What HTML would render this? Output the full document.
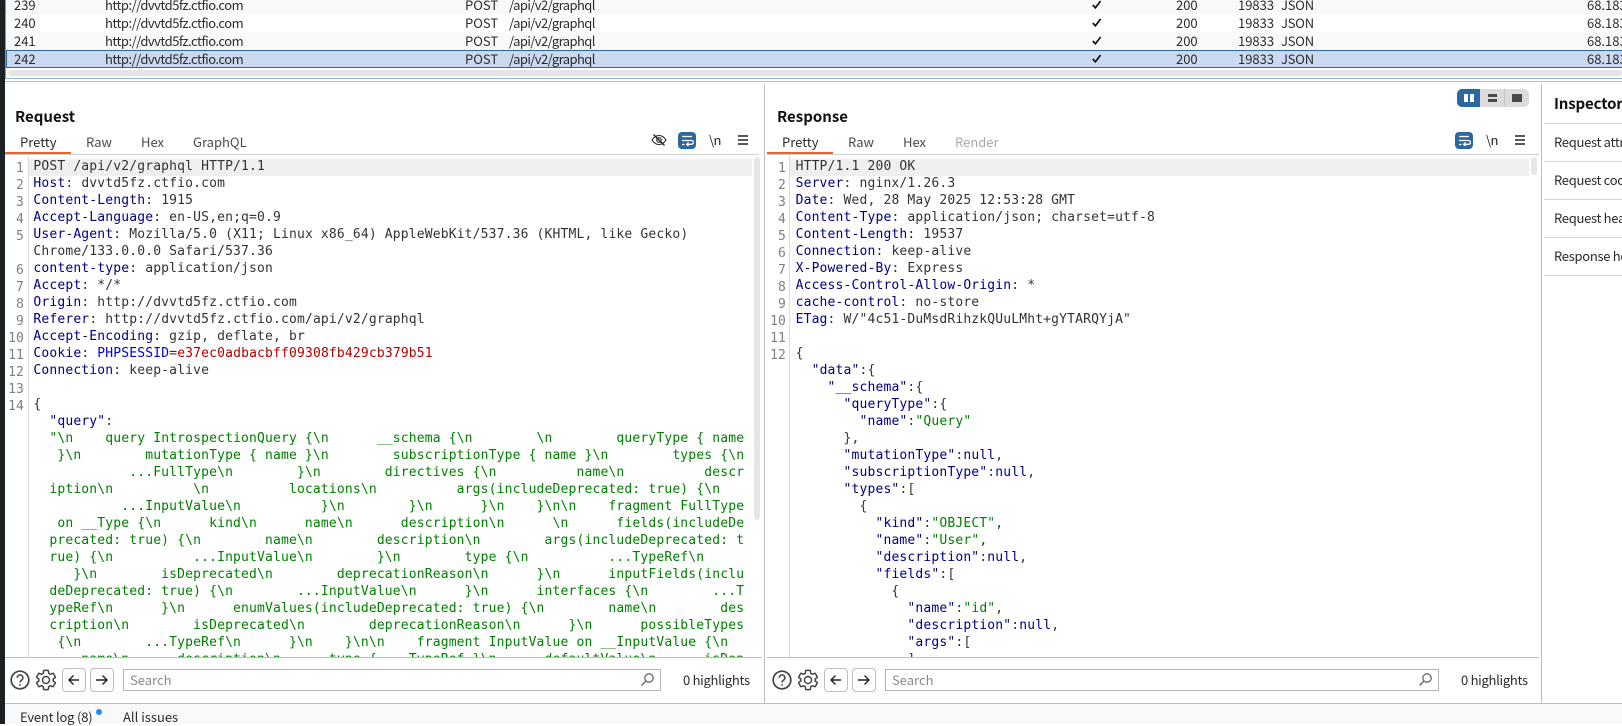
<!DOCTYPE html>
<html><head><meta charset="utf-8">
<style>
html,body{margin:0;padding:0;background:#fff}
body{width:1622px;height:724px;position:relative;overflow:hidden;font-family:"Noto Sans CJK SC","Liberation Sans",sans-serif;font-size:13px;color:#2b2b2b}
.a{position:absolute}
.t{position:absolute;white-space:pre;line-height:18px;height:18px}
.u{letter-spacing:-.5px}
.v{letter-spacing:-.6px}
.i{letter-spacing:-.2px}
.row{position:absolute;left:6px;right:0;height:18px}
.code{position:absolute;margin:0;font-family:"DejaVu Sans Mono","Liberation Mono",monospace;font-size:13px;letter-spacing:.16px;line-height:17px;color:#333;white-space:pre}
.nums{position:absolute;margin:0;font-family:"DejaVu Sans Mono",monospace;font-size:13px;letter-spacing:.135px;line-height:17px;color:#808080;text-align:right;white-space:pre}
.n{color:#000080}.s{color:#008000}.b{color:#0000d0}.r{color:#b00000}
.h{font-weight:700;font-size:15px;color:#111}
.line{position:absolute;background:#bdbdbd}
.btn{position:absolute;width:22px;height:22px;border:1px solid #bdbdbd;border-radius:4px;box-sizing:content-box}
.search{position:absolute;height:20px;border:1px solid #b5b5b5;top:669px;box-sizing:content-box;color:#8a8a8a;line-height:20px;padding-left:6px}
svg{position:absolute;overflow:visible}
</style></head><body>

<!-- table -->
<div class="row" style="top:-4px;background:#f9f9f9"></div>
<div class="row" style="top:32px;background:#f9f9f9"></div>
<div class="row" style="top:50px;height:16px;background:#c9d9ef;border:1px solid #2a689f;border-right:0"></div>

<div class="t" style="left:14px;top:-4px">239</div><div class="t u" style="left:105px;top:-4px">http://dvvtd5fz.ctfio.com</div><div class="t" style="left:465px;top:-4px">POST</div><div class="t v" style="left:509px;top:-4px">/api/v2/graphql</div><div class="t" style="left:1176px;top:-4px">200</div><div class="t" style="left:1238px;top:-4px">19833</div><div class="t i" style="left:1281px;top:-4px">JSON</div><div class="t" style="left:1587px;top:-4px">68.183.</div>
<div class="t" style="left:14px;top:14px">240</div><div class="t u" style="left:105px;top:14px">http://dvvtd5fz.ctfio.com</div><div class="t" style="left:465px;top:14px">POST</div><div class="t v" style="left:509px;top:14px">/api/v2/graphql</div><div class="t" style="left:1176px;top:14px">200</div><div class="t" style="left:1238px;top:14px">19833</div><div class="t i" style="left:1281px;top:14px">JSON</div><div class="t" style="left:1587px;top:14px">68.183.</div>
<div class="t" style="left:14px;top:32px">241</div><div class="t u" style="left:105px;top:32px">http://dvvtd5fz.ctfio.com</div><div class="t" style="left:465px;top:32px">POST</div><div class="t v" style="left:509px;top:32px">/api/v2/graphql</div><div class="t" style="left:1176px;top:32px">200</div><div class="t" style="left:1238px;top:32px">19833</div><div class="t i" style="left:1281px;top:32px">JSON</div><div class="t" style="left:1587px;top:32px">68.183.</div>
<div class="t" style="left:14px;top:50px">242</div><div class="t u" style="left:105px;top:50px">http://dvvtd5fz.ctfio.com</div><div class="t" style="left:465px;top:50px">POST</div><div class="t v" style="left:509px;top:50px">/api/v2/graphql</div><div class="t" style="left:1176px;top:50px">200</div><div class="t" style="left:1238px;top:50px">19833</div><div class="t i" style="left:1281px;top:50px">JSON</div><div class="t" style="left:1587px;top:50px">68.183.</div>

<svg style="left:1092px;top:0" width="10" height="66" fill="none" stroke="#111" stroke-width="1.7"><path d="M.8 5l2.6 2.8L8.6 1"/><path d="M.8 23l2.6 2.8L8.6 19"/><path d="M.8 41l2.6 2.8L8.6 37"/><path d="M.8 59l2.6 2.8L8.6 55"/></svg>

<div class="a" style="left:8px;right:0;top:70px;height:6px;background:#e5e5e5;border-radius:3px"></div>
<div class="a" style="left:5px;right:0;top:78px;height:1px;background:#8fb8dc"></div>
<div class="line" style="left:5px;right:0;top:81px;height:1px"></div>
<div class="a" style="left:5px;top:0;width:1px;height:79px;background:#6f9fc8"></div>

<!-- splitters -->
<div class="line" style="left:764px;top:84px;width:1px;height:619px"></div>
<div class="line" style="left:1541px;top:84px;width:1px;height:619px"></div>

<!-- layout toggle -->
<div class="a" style="left:1457px;top:89px;width:72px;height:18px;background:#dcdcdc;border-radius:5px"></div>
<div class="a" style="left:1457px;top:89px;width:23px;height:18px;background:#2a689f;border-radius:5px 0 0 5px"></div>
<div class="a" style="left:1504px;top:89px;width:1px;height:18px;background:#c4c4c4"></div>
<div class="a" style="left:1464px;top:94px;width:4px;height:8px;background:#fff"></div>
<div class="a" style="left:1470px;top:94px;width:4px;height:8px;background:#fff"></div>
<div class="a" style="left:1488px;top:94px;width:9px;height:3px;background:#4a4a4a"></div>
<div class="a" style="left:1488px;top:99px;width:9px;height:3px;background:#4a4a4a"></div>
<div class="a" style="left:1512px;top:94px;width:10px;height:8px;background:#4a4a4a"></div>

<!-- request -->
<div class="t h" style="left:15px;top:108px">Request</div>
<div class="t" style="left:20px;top:133px">Pretty</div>
<div class="t" style="left:86px;top:133px;color:#4a4a4a">Raw</div>
<div class="t" style="left:141px;top:133px;color:#4a4a4a">Hex</div>
<div class="t" style="left:193px;top:133px;color:#4a4a4a">GraphQL</div>
<div class="a" style="left:5px;top:152px;width:66px;height:2px;background:#e8622c"></div>
<div class="line" style="left:5px;top:154px;width:754px;height:1px;background:#cfcfcf"></div>

<svg style="left:651px;top:132px" width="16" height="16" fill="none" stroke="#222" stroke-width="1.1"><path d="M1 8c2-3 4.400-4.500 7-4.500S13 5 15 8c-2 3-4.400 4.500-7 4.500S3 11 1 8z"/><circle cx="8" cy="8" r="2.300"/><path d="M2.500 2.500l11 11" stroke-width="1.300"/></svg>
<div class="a" style="left:678px;top:132px;width:18px;height:17px;background:#2a689f;border-radius:4px"></div>
<svg style="left:678px;top:132px" width="18" height="17" fill="none" stroke="#fff" stroke-width="1.300"><path d="M4 4.500h10"/><path d="M4 8.500h9.500a1.800 1.800 0 0 1 0 3.800H9"/><path d="M10.500 10.500L8.700 12.300l1.800 1.700"/><path d="M4 12.500h2.500"/></svg>
<div class="t v" style="left:709px;top:131px;color:#222">\n</div>
<svg style="left:738px;top:135px" width="10" height="10" stroke="#222" stroke-width="1.500"><path d="M0 1h10M0 5h10M0 9h10"/></svg>

<div class="a" style="left:28px;top:155px;width:1px;height:502px;background:#dcdcdc"></div>
<div class="a" style="left:29px;top:159px;width:723px;height:17px;background:#efefef"></div>
<div class="a" style="left:754px;top:157px;width:6px;height:363px;background:#e6e6e6;border-radius:3px"></div>

<div class="a" style="left:0;top:155px;width:762px;height:502px;overflow:hidden">
<pre class="nums" style="left:0;top:5px;width:24px">1
2
3
4
5

6
7
8
9
10
11
12
13
14</pre>
<pre class="code" style="left:33.400px;top:3px">POST /api/v2/graphql HTTP/1.1
<span class="n">Host</span>: dvvtd5fz.ctfio.com
<span class="n">Content-Length</span>: 1915
<span class="n">Accept-Language</span>: en-US,en;q=0.9
<span class="n">User-Agent</span>: Mozilla/5.0 (X11; Linux x86_64) AppleWebKit/537.36 (KHTML, like Gecko)
Chrome/133.0.0.0 Safari/537.36
<span class="n">content-type</span>: application/json
<span class="n">Accept</span>: */*
<span class="n">Origin</span>: http://dvvtd5fz.ctfio.com
<span class="n">Referer</span>: http://dvvtd5fz.ctfio.com/api/v2/graphql
<span class="n">Accept-Encoding</span>: gzip, deflate, br
<span class="n">Cookie</span>: <span class="b">PHPSESSID</span>=<span class="r">e37ec0adbacbff09308fb429cb379b51</span>
<span class="n">Connection</span>: keep-alive

{
  <span class="n">"query"</span>:
  <span class="s">"\n    query IntrospectionQuery {\n      __schema {\n        \n        queryType { name
   }\n        mutationType { name }\n        subscriptionType { name }\n        types {\n
            ...FullType\n        }\n        directives {\n          name\n          descr
  iption\n          \n          locations\n          args(includeDeprecated: true) {\n   
           ...InputValue\n          }\n        }\n      }\n    }\n\n    fragment FullType
   on __Type {\n      kind\n      name\n      description\n      \n      fields(includeDe
  precated: true) {\n        name\n        description\n        args(includeDeprecated: t
  rue) {\n          ...InputValue\n        }\n        type {\n          ...TypeRef\n     
     }\n        isDeprecated\n        deprecationReason\n      }\n      inputFields(inclu
  deDeprecated: true) {\n        ...InputValue\n      }\n      interfaces {\n        ...T
  ypeRef\n      }\n      enumValues(includeDeprecated: true) {\n        name\n        des
  cription\n        isDeprecated\n        deprecationReason\n      }\n      possibleTypes
   {\n        ...TypeRef\n      }\n    }\n\n    fragment InputValue on __InputValue {\n  
      name\n      description\n      type { ...TypeRef }\n      defaultValue\n      isDep</span></pre>
</div>

<!-- response -->
<div class="t h" style="left:777px;top:108px">Response</div>
<div class="t" style="left:782px;top:133px">Pretty</div>
<div class="t" style="left:848px;top:133px;color:#4a4a4a">Raw</div>
<div class="t" style="left:903px;top:133px;color:#4a4a4a">Hex</div>
<div class="t" style="left:955px;top:133px;color:#a8a8a8">Render</div>
<div class="a" style="left:767px;top:152px;width:66px;height:2px;background:#e8622c"></div>
<div class="line" style="left:767px;top:154px;width:772px;height:1px;background:#cfcfcf"></div>

<div class="a" style="left:1455px;top:132px;width:18px;height:17px;background:#2a689f;border-radius:4px"></div>
<svg style="left:1455px;top:132px" width="18" height="17" fill="none" stroke="#fff" stroke-width="1.300"><path d="M4 4.500h10"/><path d="M4 8.500h9.500a1.800 1.800 0 0 1 0 3.800H9"/><path d="M10.500 10.500L8.700 12.300l1.800 1.700"/><path d="M4 12.500h2.500"/></svg>
<div class="t v" style="left:1486px;top:131px;color:#222">\n</div>
<svg style="left:1515px;top:135px" width="10" height="10" stroke="#222" stroke-width="1.500"><path d="M0 1h10M0 5h10M0 9h10"/></svg>

<div class="a" style="left:789px;top:155px;width:1px;height:502px;background:#dcdcdc"></div>
<div class="a" style="left:790px;top:159px;width:739px;height:17px;background:#efefef"></div>
<div class="a" style="left:1531px;top:157px;width:6px;height:18px;background:#e6e6e6;border-radius:3px"></div>

<div class="a" style="left:766px;top:155px;width:773px;height:502px;overflow:hidden">
<pre class="nums" style="left:0;top:5px;width:20px">1
2
3
4
5
6
7
8
9
10
11
12</pre>
<pre class="code" style="left:29.600px;top:3px">HTTP/1.1 200 OK
<span class="n">Server</span>: nginx/1.26.3
<span class="n">Date</span>: Wed, 28 May 2025 12:53:28 GMT
<span class="n">Content-Type</span>: application/json; charset=utf-8
<span class="n">Content-Length</span>: 19537
<span class="n">Connection</span>: keep-alive
<span class="n">X-Powered-By</span>: Express
<span class="n">Access-Control-Allow-Origin</span>: *
<span class="n">cache-control</span>: no-store
<span class="n">ETag</span>: W/"4c51-DuMsdRihzkQUuLMht+gYTARQYjA"

{
  <span class="n">"data"</span>:{
    <span class="n">"__schema"</span>:{
      <span class="n">"queryType"</span>:{
        <span class="n">"name"</span>:<span class="s">"Query"</span>
      },
      <span class="n">"mutationType"</span>:<span class="n">null</span>,
      <span class="n">"subscriptionType"</span>:<span class="n">null</span>,
      <span class="n">"types"</span>:[
        {
          <span class="n">"kind"</span>:<span class="s">"OBJECT"</span>,
          <span class="n">"name"</span>:<span class="s">"User"</span>,
          <span class="n">"description"</span>:<span class="n">null</span>,
          <span class="n">"fields"</span>:[
            {
              <span class="n">"name"</span>:<span class="s">"id"</span>,
              <span class="n">"description"</span>:<span class="n">null</span>,
              <span class="n">"args"</span>:[
              ]</pre>
</div>

<!-- inspector -->
<div class="t h" style="left:1554px;top:95px;letter-spacing:-.15px">Inspector</div>
<div class="line" style="left:1544px;right:0;top:123px;height:1px;background:#d5d5d5"></div>
<div class="t i" style="left:1554px;top:133px;letter-spacing:-.3px">Request attributes</div>
<div class="line" style="left:1544px;right:0;top:161px;height:1px;background:#d5d5d5"></div>
<div class="t i" style="left:1554px;top:171px;letter-spacing:-.3px">Request cookies</div>
<div class="line" style="left:1544px;right:0;top:199px;height:1px;background:#d5d5d5"></div>
<div class="t i" style="left:1554px;top:209px;letter-spacing:-.3px">Request headers</div>
<div class="line" style="left:1544px;right:0;top:237px;height:1px;background:#d5d5d5"></div>
<div class="t i" style="left:1554px;top:247px;letter-spacing:-.3px">Response headers</div>
<div class="line" style="left:1544px;right:0;top:275px;height:1px;background:#d5d5d5"></div>

<!-- bottom bars -->
<div class="line" style="left:5px;top:657px;width:757px;height:1px"></div>
<div class="line" style="left:767px;top:657px;width:772px;height:1px"></div>

<svg style="left:10px;top:670px" width="20" height="20" fill="none" stroke="#444" stroke-width="1.700"><circle cx="10" cy="10" r="8.800"/><path d="M7.300 7.800a2.800 2.800 0 1 1 4.300 2.300c-1 .7-1.600 1.200-1.600 2.400" stroke-width="1.500"/><path d="M10 14.200v1.600" stroke-width="1.600"/></svg>
<svg style="left:34px;top:668px" width="24" height="24" viewBox="0 0 24 24" fill="none" stroke="#444" stroke-width="1.500"><path d="M19.140 12.940c.04-.3.06-.61.06-.94 0-.32-.02-.64-.07-.94l2.030-1.580c.18-.14.230-.41.120-.61l-1.920-3.320c-.12-.22-.37-.29-.59-.22l-2.390.96c-.5-.38-1.030-.7-1.620-.94l-.36-2.540c-.04-.24-.24-.41-.48-.41h-3.840c-.24 0-.43.17-.47.41l-.36 2.540c-.59.24-1.130.57-1.620.94l-2.390-.96c-.22-.08-.47 0-.59.22L2.740 8.870c-.12.21-.08.47.12.61l2.030 1.580c-.05.3-.09.63-.09.94s.02.64.07.94l-2.030 1.580c-.18.14-.23.41-.12.61l1.920 3.320c.12.22.37.29.59.22l2.390-.96c.5.38 1.030.7 1.620.94l.36 2.540c.05.24.24.41.48.41h3.840c.24 0 .44-.17.47-.41l.36-2.540c.59-.24 1.130-.56 1.620-.94l2.390.96c.22.08.47 0 .59-.22l1.920-3.320c.12-.22.07-.47-.12-.61l-2.010-1.580z"/><circle cx="12" cy="12" r="3.500"/></svg>
<div class="btn" style="left:62px;top:668px"></div>
<svg style="left:68px;top:674px" width="12" height="12" fill="none" stroke="#222" stroke-width="1.400"><path d="M11 6H1M5.500 1.500L1 6l4.500 4.500"/></svg>
<div class="btn" style="left:90px;top:668px"></div>
<svg style="left:96px;top:674px" width="12" height="12" fill="none" stroke="#222" stroke-width="1.400"><path d="M0 6h10M6.500 1.500L11 6l-4.500 4.500"/></svg>
<div class="search" style="left:123px;width:530px">Search</div>
<svg style="left:641px;top:673px" width="13" height="13" fill="none" stroke="#666" stroke-width="1.300"><circle cx="8" cy="5" r="4.200"/><path d="M5 8l-4.500 4.500"/></svg>
<div class="t" style="left:683px;top:671px;letter-spacing:-.28px">0 highlights</div>

<svg style="left:772px;top:670px" width="20" height="20" fill="none" stroke="#444" stroke-width="1.700"><circle cx="10" cy="10" r="8.800"/><path d="M7.300 7.800a2.800 2.800 0 1 1 4.300 2.300c-1 .7-1.600 1.200-1.600 2.400" stroke-width="1.500"/><path d="M10 14.200v1.600" stroke-width="1.600"/></svg>
<svg style="left:796px;top:668px" width="24" height="24" viewBox="0 0 24 24" fill="none" stroke="#444" stroke-width="1.500"><path d="M19.140 12.940c.04-.3.06-.61.06-.94 0-.32-.02-.64-.07-.94l2.030-1.580c.18-.14.230-.41.120-.61l-1.920-3.320c-.12-.22-.37-.29-.59-.22l-2.390.96c-.5-.38-1.030-.7-1.620-.94l-.36-2.540c-.04-.24-.24-.41-.48-.41h-3.840c-.24 0-.43.17-.47.41l-.36 2.540c-.59.24-1.130.57-1.620.94l-2.390-.96c-.22-.08-.47 0-.59.22L2.740 8.870c-.12.21-.08.47.12.61l2.030 1.580c-.05.3-.09.63-.09.94s.02.64.07.94l-2.030 1.580c-.18.14-.23.41-.12.61l1.920 3.320c.12.22.37.29.59.22l2.390-.96c.5.38 1.030.7 1.620.94l.36 2.540c.05.24.24.41.48.41h3.840c.24 0 .44-.17.47-.41l.36-2.540c.59-.24 1.130-.56 1.620-.94l2.390.96c.22.08.47 0 .59-.22l1.920-3.320c.12-.22.07-.47-.12-.61l-2.010-1.580z"/><circle cx="12" cy="12" r="3.500"/></svg>
<div class="btn" style="left:824px;top:668px"></div>
<svg style="left:830px;top:674px" width="12" height="12" fill="none" stroke="#222" stroke-width="1.400"><path d="M11 6H1M5.500 1.500L1 6l4.500 4.500"/></svg>
<div class="btn" style="left:852px;top:668px"></div>
<svg style="left:858px;top:674px" width="12" height="12" fill="none" stroke="#222" stroke-width="1.400"><path d="M0 6h10M6.500 1.500L11 6l-4.500 4.500"/></svg>
<div class="search" style="left:885px;width:546px">Search</div>
<svg style="left:1419px;top:673px" width="13" height="13" fill="none" stroke="#666" stroke-width="1.300"><circle cx="8" cy="5" r="4.200"/><path d="M5 8l-4.500 4.500"/></svg>
<div class="t" style="left:1461px;top:671px;letter-spacing:-.28px">0 highlights</div>

<div class="a" style="left:5px;right:0;top:703px;height:21px;background:#f9f9f9"></div>
<div class="line" style="left:5px;right:0;top:703px;height:1px"></div>
<div class="t i" style="left:20px;top:708px">Event log (8)</div>
<div class="a" style="left:96px;top:709px;width:6px;height:6px;border-radius:50%;background:#1e8ef0"></div>
<div class="t" style="left:123px;top:708px">All issues</div>

<div class="a" style="left:0;top:0;width:5px;height:724px;background:#1d2025"></div>
</body></html>
